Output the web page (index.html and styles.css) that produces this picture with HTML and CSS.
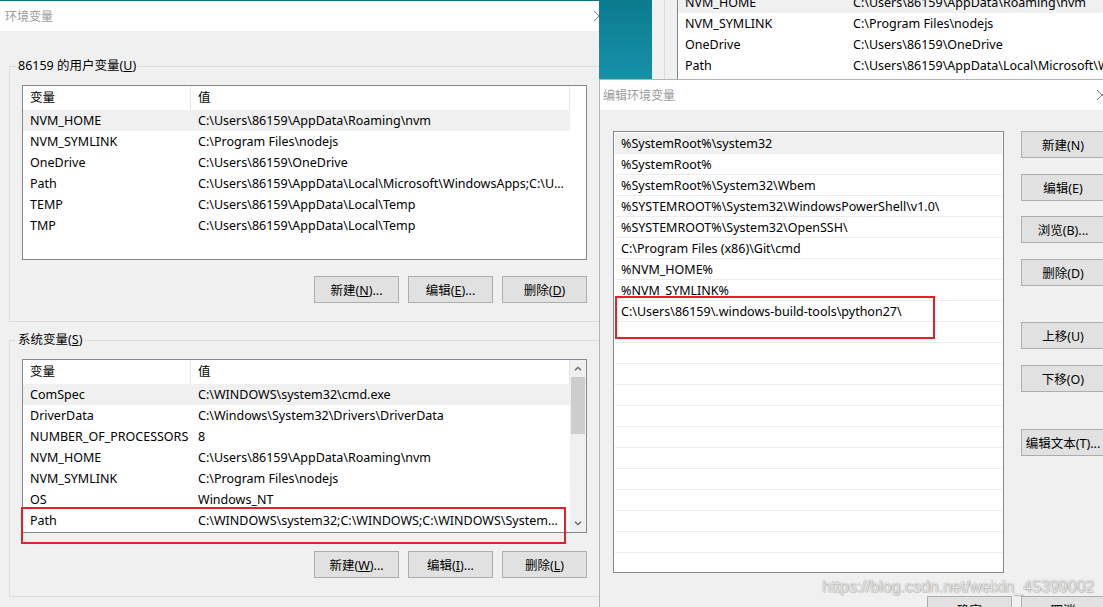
FILE: index.html
```html
<!DOCTYPE html>
<html lang="zh-CN">
<head>
    <meta charset="UTF-8">
    <meta name="viewport" content="width=device-width, initial-scale=1.0">
    <title>环境变量</title>
    <link rel="stylesheet" href="styles.css">
</head>
<body>
    <div class="shot shot-left">
        <div class="window">
            <div class="titlebar">
                <span class="title">环境变量</span>
                <span class="close"><svg viewBox="0 0 10 10"><path d="M0 0L10 10M10 0L0 10" stroke="#808080" stroke-width="1" fill="none"/></svg></span>
            </div>
            <div class="window-body">
                <div class="group">
                    <div class="group-title">86159 的用户变量(<u>U</u>)</div>
                    <div class="list list-user">
                        <div class="list-main">
                            <div class="list-head"><div class="cell name">变量</div><div class="cell value">值</div></div>
                            <div class="row selected"><div class="cell name">NVM_HOME</div><div class="cell value">C:\Users\86159\AppData\Roaming\nvm</div></div>
                            <div class="row"><div class="cell name">NVM_SYMLINK</div><div class="cell value">C:\Program Files\nodejs</div></div>
                            <div class="row"><div class="cell name">OneDrive</div><div class="cell value">C:\Users\86159\OneDrive</div></div>
                            <div class="row"><div class="cell name">Path</div><div class="cell value">C:\Users\86159\AppData\Local\Microsoft\WindowsApps;C:\U...</div></div>
                            <div class="row"><div class="cell name">TEMP</div><div class="cell value">C:\Users\86159\AppData\Local\Temp</div></div>
                            <div class="row"><div class="cell name">TMP</div><div class="cell value">C:\Users\86159\AppData\Local\Temp</div></div>
                        </div>
                    </div>
                    <div class="buttons">
                        <button class="btn">新建(<u>N</u>)...</button>
                        <button class="btn">编辑(<u>E</u>)...</button>
                        <button class="btn">删除(<u>D</u>)</button>
                    </div>
                </div>

                <div class="group group-system">
                    <div class="group-title">系统变量(<u>S</u>)</div>
                    <div class="list list-system">
                        <div class="list-main">
                            <div class="list-head"><div class="cell name">变量</div><div class="cell value">值</div></div>
                            <div class="row selected"><div class="cell name">ComSpec</div><div class="cell value">C:\WINDOWS\system32\cmd.exe</div></div>
                            <div class="row"><div class="cell name">DriverData</div><div class="cell value">C:\Windows\System32\Drivers\DriverData</div></div>
                            <div class="row"><div class="cell name">NUMBER_OF_PROCESSORS</div><div class="cell value">8</div></div>
                            <div class="row"><div class="cell name">NVM_HOME</div><div class="cell value">C:\Users\86159\AppData\Roaming\nvm</div></div>
                            <div class="row"><div class="cell name">NVM_SYMLINK</div><div class="cell value">C:\Program Files\nodejs</div></div>
                            <div class="row"><div class="cell name">OS</div><div class="cell value">Windows_NT</div></div>
                            <div class="row"><div class="cell name">Path</div><div class="cell value">C:\WINDOWS\system32;C:\WINDOWS;C:\WINDOWS\System...</div></div>
                        </div>
                        <div class="scrollbar">
                            <span class="scroll-arrow"><svg viewBox="0 0 8 5"><path d="M1 4.3L4 1.3L7 4.3" stroke="#606060" stroke-width="1.3" fill="none"/></svg></span>
                            <span class="scroll-thumb"></span>
                            <span class="scroll-track"></span>
                            <span class="scroll-arrow"><svg viewBox="0 0 8 5"><path d="M1 0.7L4 3.7L7 0.7" stroke="#606060" stroke-width="1.3" fill="none"/></svg></span>
                        </div>
                    </div>
                    <div class="buttons">
                        <button class="btn">新建(<u>W</u>)...</button>
                        <button class="btn">编辑(<u>I</u>)...</button>
                        <button class="btn">删除(<u>L</u>)</button>
                    </div>
                </div>
            </div>
        </div>
        <div class="mark mark-path"></div>
    </div>

    <div class="shot shot-right">
        <div class="window behind">
            <div class="titlebar">
                <span class="title">环境变量</span>
            </div>
            <div class="window-body">
                <div class="group">
                    <div class="group-title">86159 的用户变量(<u>U</u>)</div>
                    <div class="list list-user">
                        <div class="list-main">
                            <div class="list-head"><div class="cell name">变量</div><div class="cell value">值</div></div>
                            <div class="row selected"><div class="cell name">NVM_HOME</div><div class="cell value">C:\Users\86159\AppData\Roaming\nvm</div></div>
                            <div class="row"><div class="cell name">NVM_SYMLINK</div><div class="cell value">C:\Program Files\nodejs</div></div>
                            <div class="row"><div class="cell name">OneDrive</div><div class="cell value">C:\Users\86159\OneDrive</div></div>
                            <div class="row"><div class="cell name">Path</div><div class="cell value">C:\Users\86159\AppData\Local\Microsoft\WindowsApps;C:\U...</div></div>
                        </div>
                    </div>
                </div>
            </div>
        </div>

        <div class="dialog">
            <div class="titlebar">
                <span class="title">编辑环境变量</span>
                <span class="close"><svg viewBox="0 0 10 10"><path d="M0 0L10 10M10 0L0 10" stroke="#808080" stroke-width="1" fill="none"/></svg></span>
            </div>
            <div class="dialog-body">
                <div class="dialog-main">
                    <div class="path-list">
                        <div class="path-row selected">%SystemRoot%\system32</div>
                        <div class="path-row">%SystemRoot%</div>
                        <div class="path-row">%SystemRoot%\System32\Wbem</div>
                        <div class="path-row">%SYSTEMROOT%\System32\WindowsPowerShell\v1.0\</div>
                        <div class="path-row">%SYSTEMROOT%\System32\OpenSSH\</div>
                        <div class="path-row">C:\Program Files (x86)\Git\cmd</div>
                        <div class="path-row">%NVM_HOME%</div>
                        <div class="path-row">%NVM_SYMLINK%</div>
                        <div class="path-row">C:\Users\86159\.windows-build-tools\python27\</div>
                        <div class="path-row"></div>
                        <div class="path-row"></div>
                        <div class="path-row"></div>
                        <div class="path-row"></div>
                        <div class="path-row"></div>
                        <div class="path-row"></div>
                        <div class="path-row"></div>
                        <div class="path-row"></div>
                        <div class="path-row"></div>
                        <div class="path-row"></div>
                        <div class="path-row"></div>
                        <div class="path-row"></div>
                    </div>
                    <div class="btn-col">
                        <button class="btn">新建(N)</button>
                        <button class="btn">编辑(E)</button>
                        <button class="btn">浏览(B)...</button>
                        <button class="btn">删除(D)</button>
                        <button class="btn spaced">上移(U)</button>
                        <button class="btn">下移(O)</button>
                        <button class="btn spaced">编辑文本(T)...</button>
                    </div>
                </div>
                <div class="dialog-footer">
                    <button class="btn">确定</button>
                    <button class="btn">取消</button>
                </div>
            </div>
        </div>

        <div class="mark mark-python"></div>
        <div class="watermark">https://blog.csdn.net/weixin_45399002</div>
    </div>
</body>
</html>
```

FILE: styles.css
```css
* {
    box-sizing: border-box;
}

body {
    margin: 0;
    width: 1103px;
    height: 607px;
    overflow: hidden;
    display: flex;
    font-family: "Noto Sans", "Noto Sans CJK SC", sans-serif;
    font-size: 12.5px;
    color: #000;
    background: #0d8196;
}

.shot {
    position: relative;
    height: 607px;
    overflow: hidden;
    flex: none;
}

.shot-left {
    width: 599px;
    background: #f0f0f0;
}

.shot-right {
    width: 504px;
    background: linear-gradient(180deg, #0b7b8f 0%, #1590a7 12%, #0d8095 26%, #1692a9 40%, #0c7d92 55%, #1590a7 70%, #0b7b8f 85%, #138ca3 100%);
}

/* window chrome */
.window {
    width: 622px;
    background: #f0f0f0;
}

.titlebar {
    display: flex;
    align-items: center;
    justify-content: space-between;
    height: 31px;
    padding-left: 5px;
    background: #fff;
    border-top: 1px solid #17707f;
    color: #9b9b9b;
    font-size: 12px;
}

.close {
    display: flex;
    align-items: center;
    justify-content: center;
    width: 46px;
    height: 100%;
}

.close svg {
    width: 10px;
    height: 10px;
}

.window-body {
    padding: 35px 0 14px 9px;
}

/* group boxes */
.group {
    width: 592px;
    border: 1px solid #dcdcdc;
    padding: 0 13px 18px 12px;
}

.group + .group {
    margin-top: 18px;
}

.group-title {
    width: fit-content;
    margin: -10px 0 0 -6px;
    padding: 0 2px;
    line-height: 18px;
    background: #f0f0f0;
}

/* list views */
.list {
    display: flex;
    margin-top: 10px;
    background: #fff;
    border: 1px solid #828790;
    overflow: hidden;
}

.list-user {
    height: 175px;
}

.list-system {
    height: 174px;
}

.list-main {
    width: 547px;
    flex: none;
}

.list-head {
    display: flex;
    height: 24px;
}

.list-head .cell {
    line-height: 24px;
    border-right: 1px solid #e5e5e5;
}

.row {
    display: flex;
    height: 21px;
    line-height: 21px;
}

.row.selected {
    background: #f0f0f0;
}

.cell.name {
    width: 168px;
    flex: none;
    padding-left: 7px;
    white-space: nowrap;
}

.cell.value {
    flex: 1;
    min-width: 0;
    padding-left: 7px;
    white-space: nowrap;
    overflow: hidden;
}

.scrollbar {
    width: 16px;
    display: flex;
    flex-direction: column;
    background: #f0f0f0;
}

.scroll-arrow {
    height: 17px;
    display: flex;
    align-items: center;
    justify-content: center;
}

.scroll-arrow svg {
    width: 8px;
    height: 5px;
}

.scroll-thumb {
    height: 57px;
    margin: 0 1px;
    background: #cdcdcd;
}

.scroll-track {
    flex: 1;
}

/* buttons */
.buttons {
    display: flex;
    justify-content: flex-end;
    gap: 9px;
    margin-top: 16px;
}

.group-system .buttons {
    margin-top: 18px;
}

.btn {
    width: 85px;
    height: 27px;
    padding: 0;
    border: 1px solid #adadad;
    background: #e1e1e1;
    font: inherit;
    color: #000;
    white-space: nowrap;
}

/* window behind the dialog */
.window.behind {
    position: absolute;
    left: 53px;
    top: -118px;
    width: 625px;
    padding-left: 3px;
}

/* edit dialog */
.dialog {
    position: absolute;
    left: 0;
    top: 79px;
    width: 527px;
    height: 560px;
    background: #f0f0f0;
    border: 1px solid #b4b4b4;
}

.dialog .titlebar {
    height: 30px;
    padding-left: 3px;
    border-top: 0;
}

.dialog-body {
    padding: 21px 20px 0 13px;
}

.dialog-main {
    display: flex;
    gap: 17px;
}

.path-list {
    width: 391px;
    height: 442px;
    padding: 1px;
    border: 1px solid #828790;
    background: #fff;
    overflow: hidden;
}

.path-row {
    height: 21px;
    padding-top: 1px;
    line-height: 20px;
    padding-left: 6px;
    border-bottom: 1px solid #ececec;
    white-space: nowrap;
}

.path-row.selected {
    background: #f0f0f0;
    border-bottom-color: #f0f0f0;
}

.btn-col {
    display: flex;
    flex-direction: column;
    gap: 15.6px;
}

.btn-col .btn {
    width: 84px;
}

.btn-col .btn.spaced {
    margin-top: 21px;
}

.dialog-footer {
    display: flex;
    justify-content: flex-end;
    gap: 9px;
    margin-top: 23px;
}

.dialog-footer .btn + .btn {
    width: 84px;
}

/* annotations */
.mark {
    position: absolute;
    border: 2px solid #e3202c;
}

.mark-path {
    left: 21px;
    top: 507px;
    width: 545px;
    height: 37px;
}

.mark-python {
    left: 16px;
    top: 296px;
    width: 320px;
    height: 43px;
}

.watermark {
    position: absolute;
    left: 223px;
    top: 576px;
    font-family: "Liberation Sans", Arial, sans-serif;
    font-size: 16px;
    line-height: 22px;
    color: rgba(255, 255, 255, 0.8);
    text-shadow: 0 0 1px rgba(0, 0, 0, 0.5), 1px 1px 1px rgba(0, 0, 0, 0.15);
    white-space: nowrap;
}
```
